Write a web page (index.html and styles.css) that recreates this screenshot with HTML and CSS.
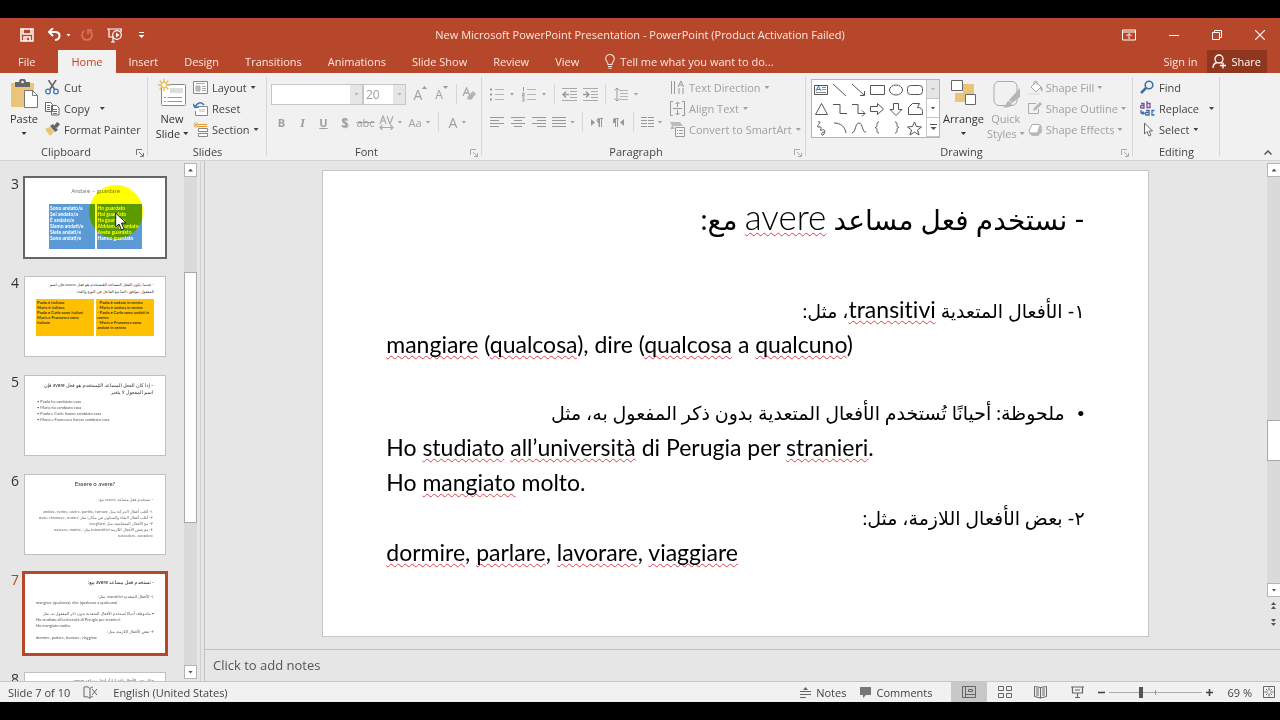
FILE: index.html
```html
<!DOCTYPE html>
<html lang="en">
<head>
<meta charset="utf-8">
<meta name="viewport" content="width=device-width, initial-scale=1">
<title>New Microsoft PowerPoint Presentation - PowerPoint</title>
<link rel="stylesheet" href="styles.css">
</head>
<body>
<div class="app">
  <header class="titlebar">
    <div class="quick">
      <button class="q-btn" aria-label="Save"><svg width="14" height="14" viewBox="0 0 14 14"><path d="M1 1h12v12H1zM3 1v5h8V1M4 13V9h6v4M6 10v3" fill="none" stroke="#fff" stroke-width="1.5"/></svg></button>
      <button class="q-btn undo" aria-label="Undo"><svg width="15" height="14" viewBox="0 0 15 14"><path d="M6 0L2 4l4 4M2 4h6c6 0 6 7 0 8" fill="none" stroke="#fff" stroke-width="2"/></svg><i class="caret"></i></button>
      <button class="q-btn redo" aria-label="Redo" disabled><svg width="14" height="14" viewBox="0 0 14 14"><path d="M4 3a5 5 0 1 0 6 0M8 6V2h4" fill="none" stroke="#d9775c" stroke-width="1.6"/></svg></button>
      <button class="q-btn" aria-label="Start from beginning"><svg width="16" height="15" viewBox="0 0 16 15"><path d="M0 1h15M2 1v8h4M14 1v3M4 14h4M6 9v5" fill="none" stroke="#fff" stroke-width="1.2"/><circle cx="10" cy="7" r="4.300" fill="#b7472a" stroke="#fff" stroke-width="1.200"/><path d="M9 4.600v5L12.500 7z" fill="#fff"/></svg></button>
      <button class="q-btn custom" aria-label="Customize toolbar"><svg width="7" height="7" viewBox="0 0 7 7"><path d="M1 .5h5" stroke="#fff"/><path d="M.5 3h6l-3 3z" fill="#fff"/></svg></button>
    </div>
    <h1 class="doc-title">New Microsoft PowerPoint Presentation - PowerPoint (Product Activation Failed)</h1>
    <div class="win">
      <button aria-label="Ribbon display options"><svg width="14" height="12" viewBox="0 0 14 12"><path d="M.5 1h13v10H.5zM.5 3h13M7 10V5M4.500 7L7 4.500 9.500 7" fill="none" stroke="#fff"/></svg></button>
      <button aria-label="Minimize"><svg width="10" height="10" viewBox="0 0 10 10"><path d="M0 5.500h10" stroke="#fff"/></svg></button>
      <button aria-label="Restore"><svg width="10" height="10" viewBox="0 0 10 10"><path d="M.5 2.500h7v7h-7zM2.500 2.500v-2h7v7h-2" fill="none" stroke="#fff"/></svg></button>
      <button aria-label="Close"><svg width="10" height="10" viewBox="0 0 10 10"><path d="M0 0l10 10M10 0L0 10" stroke="#fff" stroke-width="1.100"/></svg></button>
    </div>
  </header>

  <nav class="tabs">
    <button class="tab file">File</button>
    <button class="tab active">Home</button>
    <button class="tab">Insert</button>
    <button class="tab">Design</button>
    <button class="tab">Transitions</button>
    <button class="tab">Animations</button>
    <button class="tab">Slide Show</button>
    <button class="tab">Review</button>
    <button class="tab">View</button>
    <button class="tab tell"><svg width="10" height="15" viewBox="0 0 10 15"><path d="M3 10.500C3 8 .7 7.500.7 4.800a4.300 4.300 0 0 1 8.600 0C9.300 7.500 7 8 7 10.500zM3 12.500h4M3.500 14.300h3" fill="none" stroke="#fbe3da" stroke-width="1.100"/></svg>Tell me what you want to do...</button>
    <button class="tab sign">Sign in</button>
    <button class="share"><svg width="15" height="15" viewBox="0 0 15 15"><circle cx="7" cy="5" r="4" fill="none" stroke="#fff" stroke-width="1.300"/><path d="M1 14c0-3 2-5 4-5.500M9 8.500l1 1M8 11.500h6M11 8.500v6" fill="none" stroke="#fff" stroke-width="1.300"/></svg>Share</button>
  </nav>

  <section class="ribbon">
    <div class="group">
      <div class="body clip">
        <button class="big"><svg width="27" height="30" viewBox="0 0 27 30"><path d="M0 4h23v24H0z" fill="#eac477"/><path d="M4 3h4a3 3 0 0 1 7 0h4v5H4z" fill="#666"/><circle cx="11.500" cy="3" r="1.300" fill="#f1f1f1"/><path d="M13.500 11.500h8l5 5v12h-13z" fill="#fff" stroke="#777"/><path d="M21.500 11.500v5h5" fill="none" stroke="#777"/></svg><span>Paste</span><i class="caret"></i></button>
        <div class="stack">
          <button class="row"><svg width="15" height="15" viewBox="0 0 15 15"><path d="M3.500 0L10 10M11 0L4.500 10" stroke="#666" stroke-width="1.600"/><circle cx="3" cy="11.500" r="2.300" fill="none" stroke="#3c78b5" stroke-width="1.300"/><circle cx="11" cy="11.500" r="2.300" fill="none" stroke="#3c78b5" stroke-width="1.300"/></svg>Cut</button>
          <button class="row"><svg width="15" height="15" viewBox="0 0 15 15"><path d="M.5 1.500h5l2 2v7h-7zM6.500 4.500h5l2.500 2.500v7H6.500z" fill="#fff" stroke="#666"/><path d="M2 4.500h3M2 6.500h3M2 8.500h3M8 8.500h4M8 10.500h4M8 12.500h4" stroke="#3c78b5"/></svg>Copy<i class="caret far"></i></button>
          <button class="row"><svg width="15" height="15" viewBox="0 0 15 15"><path d="M0 7l5-2 4 5-4 4z" fill="#eac477"/><path d="M5 4l3-2 5 6-3 2zM9 4l3-4 3 2-3 4z" fill="#666"/></svg>Format Painter</button>
        </div>
      </div>
      <div class="caption has-launch">Clipboard<svg class="launch" width="8" height="8" viewBox="0 0 8 8"><path d="M.5 6V.5H6M3 3l4 4M7.500 4v3.500H4" fill="none" stroke="#777"/></svg></div>
    </div>

    <div class="group">
      <div class="body slides">
        <button class="big"><svg width="28" height="30" viewBox="0 0 28 30"><rect x="3.500" y="5.500" width="24" height="21" rx="1" fill="#fff" stroke="#888"/><path d="M12 9h13v5H12z" fill="#ddd"/><path d="M6 18.500h2m1.500 0H24M6 22.500h2m1.500 0H24" stroke="#999"/><path d="M6 0v12M0 6h12M1.700 1.700l8.600 8.600M10.300 1.700L1.700 10.300" stroke="#eab94f" stroke-width="1.400"/><circle cx="6" cy="6" r="2.500" fill="#fff" stroke="#eab94f"/></svg><span>New</span><span>Slide<i class="caret"></i></span></button>
        <div class="stack">
          <button class="row"><svg width="15" height="13" viewBox="0 0 15 13"><path d="M.5.500h14v12H.5z" fill="#fff" stroke="#888"/><path d="M3 2.500h9M3 5h4v5H3zM9 5.500h4M9 7.500h4M9 9.500h4" fill="#bbb" stroke="#aaa"/></svg>Layout<i class="caret"></i></button>
          <button class="row"><svg width="15" height="14" viewBox="0 0 15 14"><path d="M4.500 4.500h10v9h-12V9" fill="#fff" stroke="#888"/><path d="M6 7h6v3H6z" fill="#ddd"/><path d="M11 3C8-1 4 1 2 5M0 2l2 3.500L6 5" fill="none" stroke="#3c78b5" stroke-width="1.600"/></svg>Reset</button>
          <button class="row"><svg width="15" height="15" viewBox="0 0 15 15"><path d="M5 2.500h9M5 4.500h9" stroke="#e39b3b"/><path d="M5.500 6.500h9v3h-9zM5.500 11.500h9v3h-9z" fill="#fff" stroke="#888"/><path d="M3 0v6M0 3h6M1 1l4 4M5 1L1 5" stroke="#e5a63c" stroke-width=".8"/></svg>Section<i class="caret"></i></button>
        </div>
      </div>
      <div class="caption">Slides</div>
    </div>

    <div class="group dim">
      <div class="body fontbody">
        <div class="line inputs">
          <span class="pick name"><select aria-label="Font"><option></option></select><i class="caret"></i></span>
          <span class="pick size"><select aria-label="Font size"><option>20</option></select><i class="caret"></i></span>
          <button class="t big-a" aria-label="Increase font size">A<svg width="5" height="3" viewBox="0 0 5 3"><path d="M0 3L2.500 0 5 3z" fill="#999"/></svg></button>
          <button class="t small-a" aria-label="Decrease font size">A<svg width="5" height="3" viewBox="0 0 5 3"><path d="M0 0l2.500 3L5 0z" fill="#999"/></svg></button>
          <span class="sep"></span>
          <button class="t wide" aria-label="Clear formatting"><svg width="14" height="14" viewBox="0 0 14 14"><path d="M1 9L4.500 1 8 9M2.500 6h4" fill="none" stroke="#aaa" stroke-width="1.300"/><path d="M6 9l5-5 3 3-5 6-4-1z" fill="#b5b5b5"/></svg></button>
        </div>
        <div class="line">
          <button class="t"><b>B</b></button>
          <button class="t"><em class="ital">I</em></button>
          <button class="t"><b class="und">U</b></button>
          <button class="t"><b class="shad">S</b></button>
          <button class="t"><s>abc</s></button>
          <button class="t pair" aria-label="Character spacing"><svg width="15" height="15" viewBox="0 0 15 15"><path d="M1 9L4 1l3 8M2 6h4M8 1l3 8 3-8M1 12.500h13M3.500 10L1 12.500 3.500 15M11.500 10l2.500 2.500-2.500 2.500" fill="none" stroke="#aaa" stroke-width="1.200"/></svg><i class="caret"></i></button>
          <button class="t pair">Aa<i class="caret"></i></button>
          <span class="sep"></span>
          <button class="t pair"><span class="cap">A</span><i class="caret"></i></button>
        </div>
      </div>
      <div class="caption has-launch">Font<svg class="launch" width="8" height="8" viewBox="0 0 8 8"><path d="M.5 6V.5H6M3 3l4 4M7.500 4v3.500H4" fill="none" stroke="#aaa"/></svg></div>
    </div>

    <div class="group dim">
      <div class="body">
        <div class="fontbody para">
          <div class="line">
            <button class="t drop" aria-label="Bullets"><svg width="14" height="15" viewBox="0 0 14 15"><path d="M0 2.500h2M0 7.500h2M0 12.500h2" stroke="#999" stroke-width="2"/><path d="M5 2.500h9M5 7.500h9M5 12.500h9" stroke="#b5b5b5"/></svg><i class="caret"></i></button>
            <button class="t drop" aria-label="Numbering"><svg width="14" height="15" viewBox="0 0 14 15"><path d="M1.500 0v4M0 6h2v2H0v1h3M0 11h2v3H0" fill="none" stroke="#999"/><path d="M5 2.500h9M5 7.500h9M5 12.500h9" stroke="#b5b5b5"/></svg><i class="caret"></i></button>
            <span class="sep"></span>
            <button class="t" aria-label="Decrease indent"><svg width="15" height="13" viewBox="0 0 15 13"><path d="M0 .5h15M8 3.500h7M8 6.500h7M8 9.500h7M0 12.500h15" stroke="#aaa"/><path d="M7 6.500H1M4 3.500l-3 3 3 3" fill="none" stroke="#999" stroke-width="1.400"/></svg></button>
            <button class="t" aria-label="Increase indent"><svg width="15" height="13" viewBox="0 0 15 13"><path d="M0 .5h15M8 3.500h7M8 6.500h7M8 9.500h7M0 12.500h15" stroke="#aaa"/><path d="M0 6.500h6M3 3.500l3 3-3 3" fill="none" stroke="#999" stroke-width="1.400"/></svg></button>
            <span class="sep"></span>
            <button class="t drop" aria-label="Line spacing"><svg width="14" height="15" viewBox="0 0 14 15"><path d="M3 1v13M.5 3.500L3 1l2.500 2.500M.5 11.500L3 14l2.500-2.500" fill="none" stroke="#999"/><path d="M6 3.500h8M6 6.500h8M6 9.500h8M6 12.500h8" stroke="#b5b5b5"/></svg><i class="caret"></i></button>
          </div>
          <div class="line">
            <button class="t" aria-label="Align left"><svg width="14" height="10" viewBox="0 0 14 10"><path d="M0 .5h14M0 3.500h9M0 6.500h14M0 9.500h9" stroke="#999"/></svg></button>
            <button class="t" aria-label="Center"><svg width="14" height="10" viewBox="0 0 14 10"><path d="M0 .5h14M3 3.500h8M0 6.500h14M3 9.500h8" stroke="#999"/></svg></button>
            <button class="t" aria-label="Align right"><svg width="14" height="10" viewBox="0 0 14 10"><path d="M0 .5h14M5 3.500h9M0 6.500h14M5 9.500h9" stroke="#999"/></svg></button>
            <button class="t pair" aria-label="Justify"><svg width="14" height="10" viewBox="0 0 14 10"><path d="M0 .5h14M0 3.500h14M0 6.500h14M0 9.500h14" stroke="#999"/></svg><i class="caret"></i></button>
            <span class="sep thin"></span>
            <button class="t" aria-label="Left to right"><svg width="12" height="9" viewBox="0 0 12 9"><path d="M0 1v7l4-3.500z" fill="#999"/><path d="M12 .5H8a2 2 0 0 0 0 4V9M8.500.500V9M10.500.500V9" fill="none" stroke="#999"/><path d="M7 1h2v4H7z" fill="#999"/></svg></button>
            <button class="t" aria-label="Right to left"><svg width="12" height="9" viewBox="0 0 12 9"><path d="M12 1v7L8 4.500z" fill="#999"/><path d="M6.500.500H2M3.500.500V9M5.500.500V9" fill="none" stroke="#999"/><path d="M1 1h2v4H1z" fill="#999"/></svg></button>
            <span class="sep thin"></span>
            <button class="t pair" aria-label="Columns"><svg width="13" height="10" viewBox="0 0 13 10"><path d="M0 .5h6M0 3.500h6M0 6.500h6M0 9.500h6M7 .5h6M7 3.500h6M7 6.500h6M7 9.500h6" stroke="#999"/></svg><i class="caret"></i></button>
          </div>
        </div>
        <div class="stack">
          <button class="row"><svg width="15" height="15" viewBox="0 0 15 15"><path d="M1.500 1v13M4.500 1v13M9 14V8M13 14V8M8 7l3-6 2.500 6M9 5h3.500" fill="none" stroke="#999"/></svg>Text Direction<i class="caret"></i></button>
          <button class="row"><svg width="15" height="15" viewBox="0 0 15 15"><path d="M3 .5H.5v14H3M12 .5h2.500v14H12M3 7.500h9M7.500 1v5M7.500 9v5M5.500 3l2-2 2 2M5.500 12l2 2 2-2" fill="none" stroke="#999"/></svg>Align Text<i class="caret"></i></button>
          <button class="row"><svg width="15" height="15" viewBox="0 0 15 15"><path d="M0 0h10l3 4H3l2 3H0l2-3z" fill="#bbb"/><path d="M5.500 5.500h9v9h-9z" fill="#f5f5f5" stroke="#999"/><path d="M7 8.500h1m1 0h4M7 11.500h1m1 0h4" stroke="#999"/></svg>Convert to SmartArt<i class="caret"></i></button>
        </div>
      </div>
      <div class="caption has-launch">Paragraph<svg class="launch" width="8" height="8" viewBox="0 0 8 8"><path d="M.5 6V.5H6M3 3l4 4M7.500 4v3.500H4" fill="none" stroke="#aaa"/></svg></div>
    </div>

    <div class="group">
      <div class="body draw">
        <div class="gallery">
          <svg width="114" height="57" viewBox="0 0 114 57" role="img" aria-label="Shapes"><g fill="none" stroke="#555"><path d="M2.500 5.500h13v9h-13z"/><path d="M10 7.500h4M10 9.500h4M4 12.500h10" stroke="#888"/><path d="M4 11l2.500-5L9 11M5 9.500h3" stroke="#3c78b5"/><path d="M21 4l13 12M40 4l12 11M52.500 11v4.500H48"/><path d="M58.500 5.500h14v9h-14z"/><ellipse cx="84" cy="10" rx="6.500" ry="5"/><rect x="95.500" y="5.500" width="15" height="9" rx="3"/><path d="M3.500 34.500h12L9.500 23.500zM21 24.500h7v9h7M40 24.500h6v9h7M50 30.500l3 3-3 3"/><path d="M58.500 26.500h7v-3l6 5.500-6 5.500v-3h-7zM81.500 23.500h5v6h3.500l-6 6-6-6h3.500zM96.500 34.500v-7l4-4h7l-2 4c3 0 5 1 5 4v3z"/><path d="M6 42c6-2-4 6 1 5s-1 5 3 3 3 4 1 5-2-3 1-3M22 43c7 0 11 4 12 10M40 53c4-1 3-10 7-10s3 10 7 9M67 42c-4 0 0 5-4 5.500 4 .5 0 5.500 4 5.500M83 42c4 0 0 5 4 5.500-4 .5 0 5.500-4 5.500"/><path d="M102.500 42l2 4.500 5 .5-4 3 1.500 5-4.500-3-4.500 3 1.500-5-4-3 5-.5z"/></g></svg>
          <div class="gal-nav"><button aria-label="Up" class="off"><i class="caret"></i></button><button aria-label="Down"><i class="caret"></i></button><button aria-label="More"><svg width="7" height="7" viewBox="0 0 7 7"><path d="M0 .5h7" stroke="#555"/><path d="M.5 3h6l-3 3z" fill="#555"/></svg></button></div>
        </div>
        <button class="big arr"><svg width="26" height="30" viewBox="0 0 26 30"><path d="M12 5h11v10H12zM4 14h10v9H4z" fill="#eac477"/><path d="M.5 1.500h11v10H.5zM14.500 15.500h10v10h-10z" fill="#fff" stroke="#666"/></svg><span>Arrange</span><i class="caret"></i></button>
        <button class="big off"><svg width="28" height="30" viewBox="0 0 28 30"><rect x="2" y="2.500" width="23" height="24" rx="5" fill="none" stroke="#aaa"/><path d="M28 9v9l-8 6-3-3zM10 28c5 0 3-5 7-6l3 3c-1 4-6 4-10 3z" fill="#b5b5b5"/></svg><span>Quick</span><span>Styles<i class="caret"></i></span></button>
        <div class="stack off">
          <button class="row"><svg width="15" height="15" viewBox="0 0 15 15"><path d="M3 7l5-5 5 5-5 5zM6 5V2a2 2 0 0 1 3 0v3" fill="#fff" stroke="#aaa"/><path d="M12 6c3 1 3 4 2 6-1-2-2-3-2-6z" fill="#aaa"/><path d="M0 13h12v2H0z" fill="#e4e4e4"/></svg>Shape Fill<i class="caret"></i></button>
          <button class="row"><svg width="15" height="15" viewBox="0 0 15 15"><path d="M8 2.500H.5v10h10V8" fill="none" stroke="#aaa"/><path d="M5 10l1-3 6-6 2 2-6 6z" fill="#b5b5b5"/></svg>Shape Outline<i class="caret"></i></button>
          <button class="row"><svg width="15" height="15" viewBox="0 0 15 15"><path d="M1 11l3 3h6l4-4V5l-2-3z" fill="#bbb"/><path d="M4 2.500h7l1 1-2 6-1 1.500H2L1 9z" fill="#fff" stroke="#aaa"/></svg>Shape Effects<i class="caret"></i></button>
        </div>
      </div>
      <div class="caption has-launch">Drawing<svg class="launch" width="8" height="8" viewBox="0 0 8 8"><path d="M.5 6V.5H6M3 3l4 4M7.500 4v3.500H4" fill="none" stroke="#aaa"/></svg></div>
    </div>

    <div class="group">
      <div class="body edit">
        <div class="stack">
          <button class="row"><svg width="15" height="15" viewBox="0 0 15 15"><circle cx="9" cy="5" r="3.800" fill="none" stroke="#3c6fa8" stroke-width="1.600"/><path d="M6 8l-5 5" stroke="#3c6fa8" stroke-width="2.500"/></svg>Find</button>
          <button class="row"><svg width="15" height="15" viewBox="0 0 15 15"><g fill="none" stroke="#7b4fa0" stroke-width="1.300"><path d="M1 2.500h3V7H1.500a1 1 0 0 1 0-2.500H4M7 0v6.500h3v-4H7"/><path d="M6 9.500h3V14H6.500a1 1 0 0 1 0-2.500H9M14.500 9.500H12V14h2.500M1 9v3h3M2.500 10.500L4 12l-1.500 1.500" stroke="#3c6fa8"/></g></svg>Replace<i class="caret far"></i></button>
          <button class="row"><svg width="15" height="15" viewBox="0 0 15 15"><path d="M4.500 1v11l2.500-2.500L9 14l2-1-2-4h3.500z" fill="#fff" stroke="#666"/></svg>Select<i class="caret"></i></button>
        </div>
      </div>
      <div class="caption">Editing</div>
    </div>
    <div class="collapse"><button aria-label="Collapse ribbon"><svg width="8" height="5" viewBox="0 0 8 5"><path d="M.5 4.500L4 1l3.500 3.500" fill="none" stroke="#555" stroke-width="1.500"/></svg></button></div>
  </section>

  <main class="work">
    <aside class="side">
      <ol class="thumbs">
        <li><span class="num">3</span>
          <div class="thumb hover t3">
            <p class="tt">Andare – guardare</p>
            <table><tr><td>Sono andato/a<br>Sei andato/a<br>È andato/a<br>Siamo andati/e<br>Siete andati/e<br>Sono andati/e</td><td>Ho guardato<br>Hai guardato<br>Ha guardato<br>Abbiamo guardato<br>Avete guardato<br>Hanno guardato</td></tr></table>
            <span class="spot"></span>
            <svg class="pointer" width="12" height="19" viewBox="0 0 12 19"><path d="M.7 1v14l3.300-3 2.500 6 2.500-1-2.500-6h4.500z" fill="#fff" stroke="#222"/></svg>
          </div></li>
        <li><span class="num">4</span>
          <div class="thumb t4">
            <p dir="rtl">- عندما يكون الفعل المساعد المُستخدم هو فعل essere فإن اسم<br>المفعول يتوافق دائما مع الفاعل في النوع والعدد.</p>
            <table><tr><td>Paolo è italiano<br>Maria è italiana<br>Paolo e Carlo sono italiani<br>Maria e Francesca sono<br>italiane</td><td>- Paolo è andato in centro<br>- Maria è andata in centro<br>- Paolo e Carlo sono andati in centro<br>- Maria e Francesca sono andate in centro</td></tr></table>
          </div></li>
        <li><span class="num">5</span>
          <div class="thumb t5">
            <p dir="rtl">- إذا كان الفعل المساعد المُستخدم هو فعل avere فإن اسم المفعول لا يتغير</p>
            <ul><li>• Paolo ha cambiato casa</li><li>• Maria ha cambiato casa</li><li>• Paolo e Carlo hanno cambiato casa</li><li>• Maria e Francesca hanno cambiato casa</li></ul>
          </div></li>
        <li><span class="num">6</span>
          <div class="thumb t6">
            <p class="tt">Essere o avere?</p>
            <p dir="rtl" class="lead">- نستخدم فعل مساعد essere مع:</p>
            <p dir="rtl">١- أغلب أفعال الحركة: مثل andare, venire, uscire, partire, tornare</p>
            <p dir="rtl">٢- أغلب أفعال البقاء والسكون في مكان: مثل stare, rimanere, restare</p>
            <p dir="rtl">٣- مع الأفعال المنعكسة: مثل svegliarsi</p>
            <p dir="rtl">٤- مع بعض الأفعال اللازمة intransitivi مثل: nascere, morire, succedere, accadere</p>
          </div></li>
        <li class="current"><span class="num">7</span>
          <div class="thumb t7">
            <p dir="rtl" class="tt">- نستخدم فعل مساعد avere مع:</p>
            <p dir="rtl">١- الأفعال المتعدية transitivi، مثل:</p>
            <p>mangiare (qualcosa), dire (qualcosa a qualcuno)</p>
            <p class="gap" dir="rtl">• ملحوظة: أحيانًا تُستخدم الأفعال المتعدية بدون ذكر المفعول به، مثل</p>
            <p>Ho studiato all’università di Perugia per stranieri.</p>
            <p>Ho mangiato molto.</p>
            <p dir="rtl">٢- بعض الأفعال اللازمة، مثل:</p>
            <p>dormire, parlare, lavorare, viaggiare</p>
          </div></li>
        <li><span class="num">8</span>
          <div class="thumb t4"><p dir="rtl">هناك بعض الأفعال تأخذ إما أو لفعل مساعد essere</p></div></li>
      </ol>
      <div class="scroll">
        <button class="sb" aria-label="Scroll up"><i class="caret up"></i></button>
        <div class="track"><div class="knob side-knob"></div></div>
        <button class="sb" aria-label="Scroll down"><i class="caret"></i></button>
      </div>
    </aside>

    <section class="editor">
      <div class="stage-row">
        <div class="stage">
          <article class="slide" lang="ar">
            <h2 dir="rtl">- نستخدم فعل مساعد <u>avere</u> مع:</h2>
            <div class="text">
              <p dir="rtl">١- الأفعال المتعدية <u>transitivi</u>، مثل:</p>
              <p><u>mangiare</u> (<u>qualcosa</u>), dire (<u>qualcosa</u> a <u>qualcuno</u>)</p>
              <p class="bullet" dir="rtl"><span>•</span>ملحوظة: أحيانًا تُستخدم الأفعال المتعدية بدون ذكر المفعول به، مثل</p>
              <p>Ho <u>studiato</u> <u>all’università</u> di Perugia per <u>stranieri</u>.</p>
              <p>Ho <u>mangiato</u> molto.</p>
              <p dir="rtl">٢- بعض الأفعال اللازمة، مثل:</p>
              <p><u>dormire</u>, <u>parlare</u>, <u>lavorare</u>, <u>viaggiare</u></p>
            </div>
          </article>
        </div>
        <div class="scroll right">
          <button class="sb" aria-label="Scroll up"><i class="caret up"></i></button>
          <div class="track"><div class="knob main-knob"></div></div>
          <button class="sb" aria-label="Scroll down"><i class="caret"></i></button>
          <button class="jump" aria-label="Previous slide"><i class="caret up"></i><i class="caret up"></i></button>
          <button class="jump" aria-label="Next slide"><i class="caret"></i><i class="caret"></i></button>
        </div>
      </div>
      <div class="notes">Click to add notes</div>
    </section>
  </main>

  <footer class="status">
    <span class="count">Slide 7 of 10</span>
    <button class="st spell" aria-label="Spelling"><svg width="15" height="13" viewBox="0 0 15 13"><path d="M7 2.500C5 .5 3 .5 1 1v10c2-.5 4-.5 6 1.500V2.500c1-1 2-1.500 3-1.500M7 12c1-1 2-1.500 3-1.500M9 3l5 6M14 3L9 9" fill="none" stroke="#666"/></svg></button>
    <span>English (United States)</span>
    <button class="st notes-btn"><svg width="11" height="12" viewBox="0 0 11 12"><path d="M3 4l2.500-3L8 4z" fill="#666"/><path d="M0 5.500h11M0 8.500h11M0 11.500h6" stroke="#666"/></svg>Notes</button>
    <button class="st comm"><svg width="11" height="12" viewBox="0 0 11 12"><path d="M0 1h11v8H6l-3 3V9H0z" fill="#777"/></svg>Comments</button>
    <div class="views">
      <button class="view on" aria-label="Normal"><svg width="14" height="12" viewBox="0 0 14 12"><path d="M.5.500h13v11H.5zM3.500.500v11M3.500 8.500h10M6.500 3.500h4v2h-4z" fill="none" stroke="#666"/></svg></button>
      <button class="view" aria-label="Slide sorter"><svg width="14" height="12" viewBox="0 0 14 12"><path d="M.5.500h5v4h-5zM8.500.500h5v4h-5zM.5 7.500h5v4h-5zM8.500 7.500h5v4h-5z" fill="none" stroke="#666"/></svg></button>
      <button class="view" aria-label="Reading view"><svg width="14" height="13" viewBox="0 0 14 13"><path d="M6.500 1.500L.5.500v10l6 1.500 6-1.500V.5zM6.500 1.500V12M2 3h3M2 5h3M2 7h3M2 9h3M8 3h3M8 5h3M8 7h3M8 9h3" fill="none" stroke="#666"/></svg></button>
      <button class="view" aria-label="Slide show"><svg width="13" height="12" viewBox="0 0 13 12"><path d="M0 1h13M1.500 1v6h10V1M4 4h5M6.500 7v4M4 11.500h5" fill="none" stroke="#666" stroke-width="1.200"/></svg></button>
    </div>
    <button class="st zoom-b" aria-label="Zoom out"><svg width="7" height="7" viewBox="0 0 7 7"><path d="M0 3.500h7" stroke="#444" stroke-width="1.600"/></svg></button>
    <input class="zoom" type="range" min="0" max="100" value="33" aria-label="Zoom">
    <button class="st zoom-b" aria-label="Zoom in"><svg width="7" height="7" viewBox="0 0 7 7"><path d="M0 3.500h7M3.500 0v7" stroke="#444" stroke-width="1.600"/></svg></button>
    <span class="pct">69 %</span>
    <button class="st" aria-label="Fit slide to window"><svg width="12" height="12" viewBox="0 0 12 12"><path d="M.5.500h11v11H.5z" fill="none" stroke="#666"/><path d="M6 1.500v3M6 7.500v3M1.500 6h3M7.500 6h3M3 3l1.500 1.500M9 3L7.500 4.500M3 9l1.500-1.500M9 9L7.500 7.500" stroke="#666"/></svg></button>
  </footer>
</div>
</body>
</html>
```
FILE: styles.css
```css
* { box-sizing: border-box; }
body {
  margin: 0;
  background: #000;
  color: #444;
  font: 11px/15px "Open Sans", "Noto Sans", sans-serif;
}
button {
  display: flex;
  align-items: center;
  padding: 0;
  border: 0;
  background: none;
  color: inherit;
  font: inherit;
  white-space: nowrap;
}
svg { display: block; flex: none; }
p, h1, h2, ol, ul { margin: 0; padding: 0; }
ol, ul { list-style: none; }
.app {
  display: flex;
  flex-direction: column;
  height: 100vh;
  padding: 18px 0;
}
.caret {
  flex: none;
  display: inline-block;
  width: 5px;
  height: 3px;
  background: currentColor;
  clip-path: polygon(0 0, 100% 0, 50% 100%);
}
.caret.up { clip-path: polygon(50% 0, 100% 100%, 0 100%); }

/* Title bar */
.titlebar {
  display: grid;
  grid-template-columns: 1fr auto 1fr;
  align-items: center;
  height: 32px;
  background: #b7472a;
  color: #fff;
}
.quick { display: flex; align-items: center; padding-left: 20px; gap: 13px; height: 28px; }
.undo { gap: 4px; }
.redo { margin-left: -4px; }
.custom { margin-left: 2px; }
.doc-title { font-size: 11px; font-weight: 400; line-height: 34px; color: #fde8df; }
.win { display: flex; justify-content: flex-end; align-items: center; gap: 33px; height: 28px; padding-right: 15px; }

/* Tabs */
.tabs { display: flex; align-items: stretch; height: 23px; background: #b7472a; color: #fde8df; }
.tab { padding: 0 13px; }
.tab.file { padding: 0 23px 0 18px; }
.tab.active { background: #f1f1f1; color: #c43e1c; }
.tab.tell { gap: 5px; }
.tab.sign { margin-left: auto; padding: 0 10px; }
.share { gap: 4px; padding: 0 6px 0 5px; margin-right: 13px; background: #8f361f; color: #fff; }

/* Ribbon */
.ribbon {
  display: grid;
  grid-template-columns: 148fr 119fr 215fr 324fr 327fr 87fr 60fr;
  background: #f1f1f1;
  border-bottom: 1px solid #d2d2d2;
}
.group { position: relative; display: flex; flex-direction: column; min-width: 0; padding-top: 3px; }
.group::after { content: ""; position: absolute; right: 0; top: 4px; bottom: 4px; width: 1px; background: #d6d6d6; }
.body { display: flex; height: 68px; padding-left: 4px; gap: 4px; }
.body.clip { padding-left: 6px; gap: 3px; }
.body.slides { padding-left: 6px; gap: 3px; }
.body.edit { padding-left: 7px; }
.body.draw { padding-left: 5px; gap: 3px; }
.caption { position: relative; height: 16px; text-align: center; line-height: 16px; }
.has-launch { padding-right: 16px; }
.launch { position: absolute; right: 4px; top: 5px; }
.big { flex-direction: column; min-width: 36px; padding-top: 3px; line-height: 15px; color: #333; }
.big svg { margin-bottom: 2px; }
.big > .caret { margin-top: 6px; }
.big span { display: flex; align-items: center; gap: 3px; }
.stack { display: flex; flex-direction: column; padding-top: 1px; color: #444; }
.row { height: 21px; gap: 4px; }
.far { margin-left: 6px; }
.off, .off .big, .dim .body { color: #a0a0a0; }
.dim .stack { color: #a0a0a0; }

.fontbody { flex-direction: column; display: flex; gap: 6px; padding-top: 7px; }
.line { display: flex; align-items: center; height: 22px; }
.t { flex: none; justify-content: center; width: 21px; height: 22px; }
.pair { width: 29px; gap: 4px; }
.drop { width: 32px; gap: 6px; }
.para { gap: 6px; width: 180px; }
.sep { width: 1px; height: 20px; margin: 0 4px; background: #d6d6d6; }
.ital { font-family: "Liberation Serif", serif; font-size: 13px; font-weight: 700; }
.und { text-decoration: underline; }
.shad { font-size: 12px; text-shadow: 1px 1px 1px #aaa; }
.cap { font-size: 14px; }
.big-a { font-size: 14px; align-items: center; }
.small-a { font-size: 12px; }
.big-a svg, .small-a svg { align-self: flex-start; margin-top: 3px; }
.wide { width: 16px; }
.pick { position: relative; flex: none; height: 21px; }
.pick.name { width: 92px; }
.pick.size { width: 43px; margin-right: 4px; }
.pick select {
  width: 100%;
  height: 100%;
  padding: 0 2px;
  appearance: none;
  border: 1px solid #c6c6c6;
  border-radius: 0;
  background: linear-gradient(90deg, #fff calc(100% - 12px), #e6e6e6 0);
  color: #a0a0a0;
  font: 12px "Open Sans", sans-serif;
}
.pick .caret { position: absolute; right: 4px; top: 9px; color: #b5b5b5; }

.gallery { display: flex; height: 59px; margin-top: 3px; border: 1px solid #b5b5b5; background: #fff; }
.gal-nav { display: grid; grid-template-rows: repeat(3, 1fr); width: 13px; }
.gal-nav button { justify-content: center; border: solid #c6c6c6; border-width: 0 0 1px 1px; color: #555; }
.gal-nav button.off { background: #e6e6e6; color: #b5b5b5; }
.arr { min-width: 41px; }
.big.off { color: #a0a0a0; }
.draw .row { gap: 3px; }
.collapse { display: flex; align-items: flex-end; justify-content: flex-end; padding: 0 8px 5px 0; }

/* Work area */
.work { flex: 1; min-height: 0; display: flex; background: #e6e6e6; border-bottom: 1px solid #c6c6c6; }
.side { display: flex; justify-content: space-between; width: 205px; padding-right: 6px; border-right: 1px solid #c0c0c0; box-shadow: inset -3px 0 #e6e6e6, inset -4px 0 #d0d0d0; }
.thumbs { overflow: hidden; padding: 16px 3px 0 0; }
.thumbs > li { display: flex; gap: 5px; height: 81px; margin-bottom: 18px; }
.num { width: 19px; text-align: right; font-size: 14px; line-height: 13px; color: #333; }
.current .num { color: #c43e1c; }
.thumb {
  position: relative;
  width: 142px;
  height: 81px;
  padding: 6px 12px;
  background: #fff;
  border: 1px solid #c0c0c0;
  color: #333;
  font: 4px/6px Lato, "DejaVu Sans", sans-serif;
}
.thumb.hover { border: 0; outline: 2px solid #666; outline-offset: -1px; }
.current .thumb { border: 0; outline: 3px solid #b7472a; outline-offset: -1px; }
.thumb .tt { font-size: 6px; text-align: center; }
.thumb table { border-collapse: collapse; width: 100%; table-layout: fixed; font-weight: 700; }
.thumb td { padding: 1px; vertical-align: top; }
.thumb td + td { border-left: 2px solid #fff; }
.t3 { padding: 11px 24px 0 25px; }
.t3 .tt { margin-bottom: 10px; color: #777; }
.t3 table { height: 45px; background: #5b9bd5; color: #fff; font-size: 5px; }
.t4 { padding: 4px 11px; }
.t4 p { font-size: 4px; line-height: 7px; margin-bottom: 4px; }
.t4 table { height: 37px; background: #ffc000; font-size: 4px; line-height: 5px; }
.t5 p { font-size: 5px; line-height: 7px; margin-bottom: 3px; }
.t5 ul { color: #555; }
.t6 .tt { margin-bottom: 10px; }
.t6 { color: #666; font-size: 4px; }
.t6 .tt { color: #333; }
.t6 .lead { margin-bottom: 6px; }
.t7 { color: #555; }
.current .t7 .tt { font-size: 5px; text-align: right; margin-bottom: 9px; color: #222; }
.t7 .gap { margin-top: 5px; }
.spot { position: absolute; left: 65px; top: 8px; width: 54px; height: 54px; border-radius: 50%; background: #ff0; mix-blend-mode: multiply; }
.pointer { position: absolute; left: 91px; top: 35px; }

.scroll { display: flex; flex-direction: column; width: 15px; padding: 2px 1px; gap: 0; background: #e6e6e6; }
.sb { justify-content: center; height: 14px; border: 1px solid #b5b5b5; background: #fff; color: #555; }
.track { flex: 1; display: flex; flex-direction: column; background: #dadada; }
.knob { border: 1px solid #a8a8a8; background: #fff; }
.side-knob { margin-top: 95px; height: 251px; }
.right { width: 14px; padding: 2px 0 18px 1px; }
.right .sb { border-right: 0; }
.main-knob { margin-top: 243px; height: 41px; border-right: 0; }
.jump { flex-direction: column; justify-content: center; height: 17px; gap: 1px; color: #555; }

.editor { flex: 1; min-width: 0; display: flex; flex-direction: column; }
.stage-row { flex: 1; display: flex; min-height: 0; }
.stage { flex: 1; display: flex; padding: 9px 11% 12px; }
.slide {
  flex: 1;
  margin: 0 -1px;
  padding: 20px 63px 0;
  background: #fff;
  border: 1px solid #c6c6c6;
  color: #000;
  font: 23px/35px Lato, "DejaVu Sans", sans-serif;
  font-variant-ligatures: no-common-ligatures;
  text-align: left;
}
.slide [dir="rtl"], .thumb [dir="rtl"] { text-align: right; }
.slide h2 { font-size: 28px; font-weight: 400; line-height: 50px; height: 50px; margin-bottom: 51px; }
.slide h2 u { font-size: 35px; font-weight: 300; }
.slide p { height: 35px; white-space: nowrap; }
.slide p[dir="rtl"] { font-size: 19px; }
.slide p[dir="rtl"] u { font-size: 23px; }
.slide .bullet { display: flex; margin-top: 33px; }
.slide .bullet span { width: 20px; font-size: 14px; }
.slide u { text-decoration: underline wavy #d9434e 1px; text-underline-offset: 2px; text-decoration-skip-ink: none; }
.notes { height: 32px; padding-left: 8px; border-top: 1px solid #c0c0c0; font-size: 13px; line-height: 30px; color: #555; }

/* Status bar */
.status { display: flex; align-items: center; height: 20px; padding: 0 5px 0 8px; background: #f1f1f1; }
.st { gap: 5px; }
.spell { margin: 0 15px 0 13px; }
.notes-btn { margin-left: auto; }
.comm { margin: 0 19px 0 14px; }
.views { display: flex; align-self: stretch; margin-right: 3px; }
.view { justify-content: center; width: 36px; }
.view.on { background: #c8c8c8; }
.zoom-b { height: 20px; }
.zoom {
  appearance: none;
  width: 93px;
  height: 12px;
  margin: 0 4px;
  background:
    linear-gradient(#999, #999) center / 1px 5px no-repeat,
    linear-gradient(#aaa, #aaa) center / 100% 1px no-repeat;
}
.zoom::-webkit-slider-thumb { appearance: none; width: 4px; height: 11px; background: #555; }
.pct { margin: 0 11px 0 14px; }
```
